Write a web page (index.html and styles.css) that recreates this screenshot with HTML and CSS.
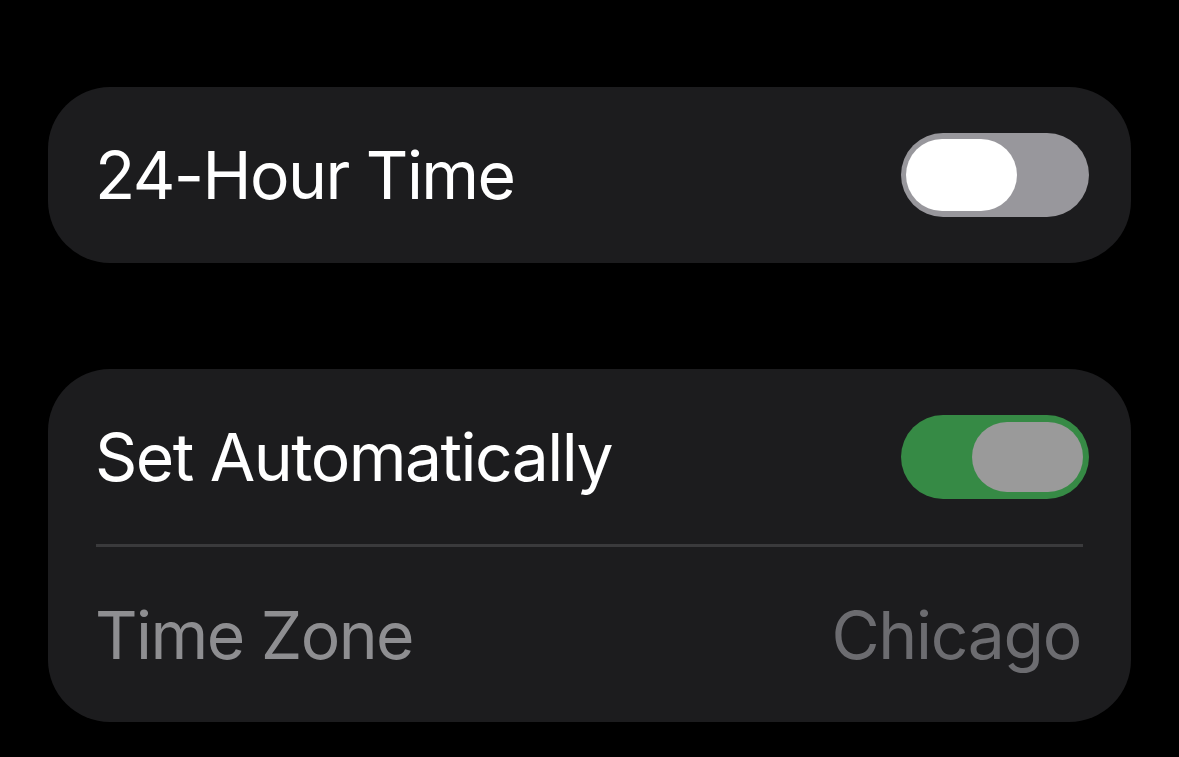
FILE: index.html
```html
<!DOCTYPE html>
<html>
<head>
<meta charset="utf-8">
<link rel="stylesheet" href="styles.css">
</head>
<body>
<main class="page">
  <section class="card card-first">
    <div class="row">
      <span class="label">24-Hour Time</span>
      <div class="toggle toggle-off"><div class="knob knob-white"></div></div>
    </div>
  </section>
  <section class="card">
    <div class="row row-top">
      <span class="label">Set Automatically</span>
      <div class="toggle toggle-on"><div class="knob knob-grey"></div></div>
    </div>
    <div class="sep"></div>
    <div class="row row-bottom">
      <span class="label label-dim">Time Zone</span>
      <span class="value">Chicago</span>
    </div>
  </section>
</main>
</body>
</html>
```

FILE: styles.css
```css
html, body {
  margin: 0;
  padding: 0;
  background: #000;
}
body {
  width: 1179px;
  height: 757px;
  overflow: hidden;
  font-family: Inter, "Noto Sans", "Liberation Sans", sans-serif;
}
.page {
  padding: 87px 48px 0 48px;
  display: flex;
  flex-direction: column;
  gap: 106px;
}
.card {
  background: #1c1c1e;
  border-radius: 62px;
  display: flex;
  flex-direction: column;
}
.row {
  height: 176px;
  display: flex;
  align-items: center;
  justify-content: space-between;
  padding: 0 42px 0 47px;
}
.row-top {
  height: 175px;
}
.row-bottom {
  height: 175px;
  padding-right: 50px;
}
.label {
  color: #ffffff;
  font-size: 66px;
  letter-spacing: -1.55px;
  line-height: 1;
}
.label-dim {
  color: #8e8e91;
}
.value {
  color: #6c6c70;
  font-size: 66px;
  letter-spacing: -1.3px;
  line-height: 1;
}
.sep {
  height: 3px;
  background: #3a3a3c;
  margin: 0 48px 0 48px;
}
.toggle {
  width: 188px;
  height: 84px;
  border-radius: 42px;
  box-sizing: border-box;
  padding: 6px;
  display: flex;
  align-items: center;
}
.toggle-off {
  background: #98979c;
  justify-content: flex-start;
  padding-left: 5px;
}
.toggle-on {
  background: #368a45;
  justify-content: flex-end;
}
.knob {
  width: 111px;
  height: 72px;
  border-radius: 36px;
}
.knob-white {
  background: #ffffff;
}
.knob-grey {
  background: #9a9a9a;
  height: 70px;
}
```
